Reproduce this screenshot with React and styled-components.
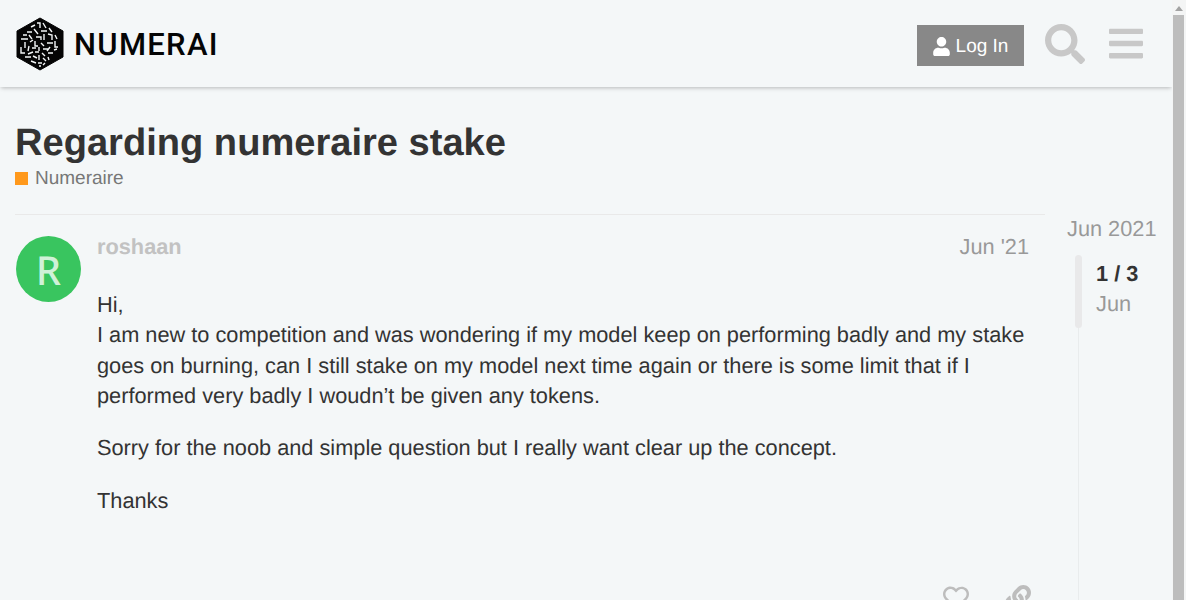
import React from 'react'
import styled, { createGlobalStyle } from 'styled-components'
import { FaUser, FaSearch, FaBars, FaRegHeart, FaLink } from 'react-icons/fa'

const GlobalStyle = createGlobalStyle`
  html, body { margin: 0; padding: 0; height: 600px; overflow: hidden; background: #f4f7f8; }
  body { font-family: "Liberation Sans", Arial, sans-serif; color: #333; text-rendering: geometricPrecision; }
  p { margin: 0; }
`

const MAZE = [
  'M36 23h3v5', 'M42 23l3 5', 'M30 27l4-2', 'M26 32h5', 'M33 29l4 5', 'M40 31h6', 'M48 28l3 4',
  'M22 35h4', 'M28 35l3 4', 'M35 37h5v3', 'M43 34v6', 'M47 34l4 1v5', 'M54 35l2 4',
  'M20 39h7', 'M24 42v6', 'M29 42l3-2', 'M34 41v5h3', 'M40 43l3 3', 'M46 43h6', 'M54 41v6h3',
  'M20 47v6h4', 'M28 46l-1 5', 'M31 48h4', 'M38 47v4', 'M42 49h5', 'M49 47l-3 4', 'M53 50l3-1',
  'M27 54l5-2', 'M34 52h4', 'M41 53l3 3', 'M47 53h5', 'M24 57h6', 'M32 56l4 2', 'M38 55v5',
  'M42 58l3 3', 'M47 57l1 3', 'M30 61l5 2', 'M37 63h4', 'M44 63l-2 2', 'M38 66h2',
]

const Logo = () => (
  <LogoMark viewBox="15 17 48 54" aria-hidden="true">
    <path d="M39 18 62 31v26L39 70 16 57V31Z" fill="#050505" stroke="#050505" strokeLinejoin="round" />
    <path d={MAZE.join(' ')} fill="none" stroke="#f4f7f8" strokeWidth="1.4" />
  </LogoMark>
)

export default function App() {
  return (
    <Viewport>
      <GlobalStyle />
      <Page>
        <Header>
          <Brand>
            <Logo />
            <Wordmark>NUMERAI</Wordmark>
          </Brand>
          <Actions>
            <LoginButton><FaUser />Log In</LoginButton>
            <SearchIcon><FaSearch /></SearchIcon>
            <MenuIcon><FaBars /></MenuIcon>
          </Actions>
        </Header>

        <Content>
          <TopicTitle>Regarding numeraire stake</TopicTitle>
          <Category><CategorySwatch />Numeraire</Category>

          <TopicArea>
            <Post>
              <Avatar>R</Avatar>
              <PostBody>
                <PostMeta>
                  <Username>roshaan</Username>
                  <PostDate>Jun '21</PostDate>
                </PostMeta>
                <Cooked>
                  <p>Hi,<br />
                    I am new to competition and was wondering if my model keep on performing badly and my stake goes on burning, can I still stake on my model next time again or there is some limit that if I performed very badly I woudn’t be given any tokens.</p>
                  <p>Sorry for the noob and simple question but I really want clear up the concept.</p>
                  <p>Thanks</p>
                </Cooked>
                <PostActions>
                  <FaRegHeart />
                  <FaLink />
                </PostActions>
              </PostBody>
            </Post>

            <Timeline>
              <TimelineDate>Jun 2021</TimelineDate>
              <Track>
                <Handle />
                <Position>
                  <strong>1 / 3</strong>
                  <span>Jun</span>
                </Position>
              </Track>
            </Timeline>
          </TopicArea>
        </Content>
      </Page>
      <Scrollbar>
        <ScrollArrow />
        <ScrollThumb />
      </Scrollbar>
    </Viewport>
  )
}

const Viewport = styled.div`
  display: flex;
  width: 1186px;
  height: 600px;
  overflow: hidden;
`
const Page = styled.div`
  width: 1172px;
  flex: none;
  background: #f4f7f8;
`
const Header = styled.header`
  height: 87px;
  box-sizing: border-box;
  padding: 0 29px 0 16px;
  display: flex;
  align-items: center;
  justify-content: space-between;
  box-shadow: 0 2px 4px -1px rgba(0, 0, 0, 0.25);
`
const Brand = styled.div`
  display: flex;
  align-items: center;
  gap: 10px;
`
const LogoMark = styled.svg`
  width: 48px;
  height: 54px;
  display: block;
`
const Wordmark = styled.span`
  margin-top: 2px;
  font-family: Roboto, "Liberation Sans", sans-serif;
  font-weight: 500;
  font-size: 31px;
  letter-spacing: 1.3px;
  color: #050505;
`
const Actions = styled.div`
  display: flex;
  align-items: center;
`
const LoginButton = styled.div`
  width: 107px;
  height: 41px;
  box-sizing: border-box;
  padding-top: 2px;
  margin-top: 4px;
  display: flex;
  align-items: center;
  justify-content: center;
  gap: 6px;
  background: #888;
  color: #fff;
  font-size: 19px;
  svg { width: 17px; height: 19px; }
`
const SearchIcon = styled.div`
  margin-left: 21px;
  color: #c8c8c8;
  display: flex;
  svg { width: 40px; height: 40px; }
`
const MenuIcon = styled.div`
  margin-left: 24px;
  color: #c8c8c8;
  display: flex;
  svg { width: 34px; height: 39px; }
`
const Content = styled.main`
  padding: 35px 0 0 15px;
`
const TopicTitle = styled.h1`
  margin: 0;
  font-size: 38.08px;
  line-height: 43px;
  font-weight: 700;
  color: #333;
`
const Category = styled.div`
  margin-top: 2px;
  display: flex;
  align-items: center;
  gap: 7px;
  font-size: 19px;
  line-height: 24px;
  color: #777;
`
const CategorySwatch = styled.span`
  width: 13px;
  height: 13px;
  margin-top: -2px;
  background: #ff991c;
`
const TopicArea = styled.div`
  display: flex;
  margin-top: 23px;
`
const Post = styled.article`
  width: 1030px;
  flex: none;
  box-sizing: border-box;
  border-top: 1px solid #e9e9e9;
  padding: 21px 16px 0 1px;
  display: flex;
  gap: 16px;
`
const Avatar = styled.div`
  width: 65px;
  height: 66px;
  flex: none;
  border-radius: 50%;
  background: #39c55f;
  color: #d0f1d8;
  display: flex;
  align-items: center;
  justify-content: center;
  font-family: "Noto Sans", sans-serif;
  font-weight: 500;
  font-size: 40px;
`
const PostBody = styled.div`
  flex: 1;
  min-width: 0;
`
const PostMeta = styled.div`
  display: flex;
  justify-content: space-between;
  align-items: baseline;
  line-height: 22px;
`
const Username = styled.span`
  font-size: 21.76px;
  font-weight: 700;
  color: #c2c2c2;
`
const PostDate = styled.span`
  font-size: 21.76px;
  color: #999;
`
const Cooked = styled.div`
  margin-top: 32px;
  font-size: 21.76px;
  line-height: 30.46px;
  color: #333;
  p + p { margin-top: 21.65px; }
`
const PostActions = styled.div`
  margin-top: 69px;
  margin-right: -2px;
  display: flex;
  justify-content: flex-end;
  gap: 36px;
  color: #bdbdbd;
  svg { width: 26px; height: 26px; }
`
const Timeline = styled.aside`
  margin-left: 22px;
  padding-top: 1px;
`
const TimelineDate = styled.div`
  font-size: 21.76px;
  line-height: 28px;
  color: #999;
`
const Track = styled.div`
  position: relative;
  margin: 12px 0 0 11px;
  height: 400px;
  border-left: 1px solid #e9eced;
  padding-left: 17px;
`
const Handle = styled.div`
  position: absolute;
  left: -4px;
  top: 0;
  width: 7px;
  height: 73px;
  border-radius: 4px;
  background: #e9e9ea;
`
const Position = styled.div`
  display: flex;
  flex-direction: column;
  font-size: 21.76px;
  line-height: 30px;
  margin-top: 4px;
  padding-top: 4px;
  strong { color: #333; }
  span { color: #999; }
`
const Scrollbar = styled.div`
  width: 14px;
  flex: none;
  box-sizing: border-box;
  padding: 0 2px 0 1px;
  background: #f4f5f5;
  display: flex;
  flex-direction: column;
  align-items: center;
`
const ScrollArrow = styled.div`
  margin: 6px 0 4px;
  border-left: 4px solid transparent;
  border-right: 4px solid transparent;
  border-bottom: 5px solid #a3a3a3;
`
const ScrollThumb = styled.div`
  width: 11px;
  flex: 1;
  background: #bdbdbd;
`
